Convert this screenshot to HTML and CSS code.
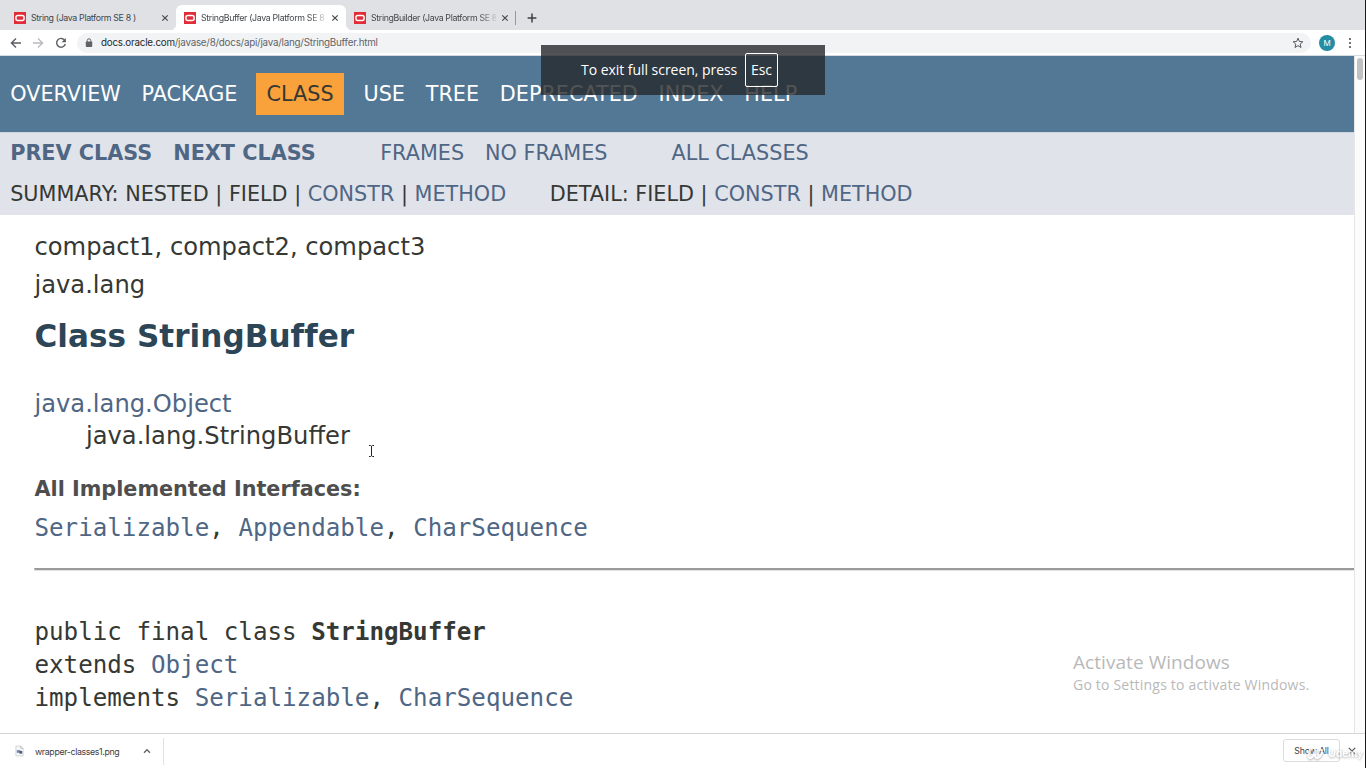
FILE: index.html
```html
<!DOCTYPE html>
<html lang="en">
<head>
<meta charset="utf-8">
<title>StringBuffer (Java Platform SE 8 )</title>
<link rel="stylesheet" href="styles.css">
</head>
<body>
<div class="browser">
  <div class="tabs">
    <div class="tab first">
      <svg class="fav" viewBox="0 0 12 12"><rect width="12" height="12" fill="#e02d38"/><rect x="1.900" y="3.5" width="8.200" height="5" rx="2" fill="none" stroke="#fff" stroke-width="1.5"/></svg>
      <span class="tab-title t1">String (Java Platform SE 8 )</span>
      <svg class="close" viewBox="0 0 8 8"><path d="M1.3 1.3l5.4 5.4M6.7 1.3L1.3 6.7"/></svg>
    </div>
    <div class="tab active">
      <svg class="fav" viewBox="0 0 12 12"><rect width="12" height="12" fill="#e02d38"/><rect x="1.900" y="3.5" width="8.200" height="5" rx="2" fill="none" stroke="#fff" stroke-width="1.5"/></svg>
      <span class="tab-title t2">StringBuffer (Java Platform SE 8</span>
      <svg class="close" viewBox="0 0 8 8"><path d="M1.3 1.3l5.4 5.4M6.7 1.3L1.3 6.7"/></svg>
    </div>
    <div class="tab third">
      <svg class="fav" viewBox="0 0 12 12"><rect width="12" height="12" fill="#e02d38"/><rect x="1.900" y="3.5" width="8.200" height="5" rx="2" fill="none" stroke="#fff" stroke-width="1.5"/></svg>
      <span class="tab-title t3">StringBuilder (Java Platform SE 8</span>
      <svg class="close" viewBox="0 0 8 8"><path d="M1.3 1.3l5.4 5.4M6.7 1.3L1.3 6.7"/></svg>
    </div>
    <span class="tab-sep"></span>
    <svg class="plus" viewBox="0 0 10 10"><path d="M5 .6v8.8M.6 5h8.8"/></svg>
  </div>

  <div class="toolbar">
    <svg class="nav-ic back" viewBox="0 0 12 12"><path d="M11 6H1.5M6 1.4L1.4 6L6 10.6"/></svg>
    <svg class="nav-ic fwd" viewBox="0 0 12 12"><path d="M1 6h9.500M6 1.400L10.600 6L6 10.600"/></svg>
    <svg class="nav-ic reload" viewBox="0 0 12 12"><path d="M9.800 3.500A4.400 4.400 0 1 0 10.300 7"/><path class="solid" d="M10.900 1v4.300H6.600z"/></svg>
    <div class="omnibox">
      <svg class="lock" viewBox="0 0 8 10"><path d="M2.200 4V2.600a1.800 1.800 0 0 1 3.600 0V4" fill="none" stroke="#5f6368" stroke-width="1"/><rect x=".8" y="3.600" width="6.400" height="5.400" rx=".7" fill="#5f6368"/></svg>
      <span class="url"><b>docs.oracle.com</b>/javase/8/docs/api/java/lang/StringBuffer.html</span>
      <svg class="star" viewBox="0 0 12 12"><path d="M6 1.200l1.350 3.250 3.500.3-2.650 2.300.8 3.450L6 8.650 3 10.500l.8-3.450-2.650-2.300 3.500-.3z"/></svg>
    </div>
    <span class="avatar">M</span>
    <svg class="dots" viewBox="0 0 4 12"><circle cx="2" cy="2" r="1.100"/><circle cx="2" cy="6" r="1.100"/><circle cx="2" cy="10" r="1.100"/></svg>
  </div>

  <div class="viewport">
    <div class="page">
      <nav class="topnav">
        <a>OVERVIEW</a><a>PACKAGE</a><a class="current">CLASS</a><a>USE</a><a>TREE</a><a>DEPRECATED</a><a>INDEX</a><a>HELP</a>
      </nav>
      <div class="subnav">
        <div class="subrow links"><b>PREV CLASS</b><b class="next">NEXT CLASS</b><a class="frames">FRAMES</a><a class="noframes">NO FRAMES</a><a class="all">ALL CLASSES</a></div>
        <div class="subrow second"><span>SUMMARY: NESTED | FIELD | <a>CONSTR</a> | <a>METHOD</a></span><span class="detail">DETAIL: FIELD | <a>CONSTR</a> | <a>METHOD</a></span></div>
      </div>
      <main class="content">
        <div class="profile">compact1, compact2, compact3</div>
        <div class="package">java.lang</div>
        <h2>Class StringBuffer</h2>
        <div class="object"><a>java.lang.Object</a></div>
        <div class="self">java.lang.StringBuffer</div>
        <div class="label">All Implemented Interfaces:</div>
        <div class="mono"><a>Serializable</a>, <a>Appendable</a>, <a>CharSequence</a></div>
        <hr>
        <pre class="signature">public final class <b>StringBuffer</b>
extends <a>Object</a>
implements <a>Serializable</a>, <a>CharSequence</a></pre>
      </main>
    </div>
    <div class="scrollbar"><div class="thumb"></div></div>
  </div>

  <div class="downloads">
    <svg class="file" viewBox="0 0 10 12"><path d="M1 .5h5.500L9 3v8.500H1z" fill="#f6f7f9" stroke="#c6c8cc" stroke-width=".8"/><path d="M6.300.5V3H9" fill="none" stroke="#aeb1b5" stroke-width=".8"/><rect x="2" y="5" width="4" height="3" fill="#7a87a6"/><rect x="5" y="6" width="3" height="3" fill="#4a5a85"/></svg>
    <span class="filename">wrapper-classes1.png</span>
    <svg class="chev" viewBox="0 0 8 6"><path d="M1 4.700L4 1.700l3 3"/></svg>
    <span class="dl-sep"></span>
    <span class="showall">Show All</span>
    <svg class="dl-close" viewBox="0 0 8 8"><path d="M.8.8l6.400 6.400M7.200.8L.8 7.200"/></svg>
  </div>
</div>
<div class="screen-edge"></div>

<div class="fullscreen-tip"><span class="tip-text">To exit full screen, press</span><span class="esc">Esc</span></div>
<svg class="ibeam" viewBox="0 0 7 12"><path d="M1 .5h1.500l1 .8 1-.8H6M3.500 1v10M1 11.500h1.500l1-.8 1 .8H6"/></svg>
<div class="activate"><div class="act-title">Activate Windows</div><div class="act-sub">Go to Settings to activate Windows.</div></div>
<div class="watermark"><svg viewBox="0 0 18 16"><path d="M5 3c-3 2-5 9-2 10s5-6 6-8c-2 5-1 8 1 8s5-3 5-6-2-3-3-1"/></svg><span>Udemy</span></div>
</body>
</html>
```
FILE: styles.css
```css
* { box-sizing: border-box; }
body { margin: 0; width: 1366px; height: 768px; overflow: hidden; background: #fff; position: relative; font-family: Inter, Roboto, sans-serif; }
svg { display: block; flex: none; }
.browser { width: 1366px; height: 768px; display: flex; flex-direction: column; }
.tabs { height: 30px; flex: none; background: #e0e1e5; display: flex; align-items: center; padding-top: 5px; }
.tab { height: 25px; display: flex; align-items: center; flex: none; position: relative; }
.first { width: 176px; padding-left: 14px; }
.active { width: 170px; padding-left: 8px; background: #fff; border-radius: 6px 6px 0 0; }
.active::before, .active::after { content: ""; position: absolute; bottom: 0; width: 6px; height: 6px; }
.active::before { left: -6px; background: radial-gradient(circle at 0 0, transparent 6px, #fff 6.5px); }
.active::after { right: -6px; background: radial-gradient(circle at 100% 0, transparent 6px, #fff 6.5px); }
.third { width: 169px; padding-left: 8px; }
.fav { width: 12px; height: 12px; margin-right: 5px; }
.tab-title { width: 125px; font-size: 8.8px; line-height: 14px; color: #44474b; white-space: nowrap; }
.t1 { letter-spacing: -.34px; }
.t2, .t3 { -webkit-mask-image: linear-gradient(90deg, #000 108px, transparent 128px); mask-image: linear-gradient(90deg, #000 108px, transparent 128px); }
.t2 { letter-spacing: -.33px; }
.t3 { letter-spacing: -.36px; }
.close { width: 8px; height: 8px; margin-left: 5px; fill: none; stroke: #46494d; stroke-width: 1.2; }
.tab-sep { width: 1px; height: 14px; background: #95989c; }
.plus { width: 10px; height: 10px; margin-left: 11px; fill: none; stroke: #3c4043; stroke-width: 1.5; }

.toolbar { height: 26px; flex: none; background: #fff; display: flex; align-items: center; border-bottom: 1px solid #d5dbe2; }
.nav-ic { width: 12px; height: 12px; fill: none; stroke: #5a5e63; stroke-width: 1.4; }
.back { margin-left: 10px; }
.fwd { margin-left: 10px; stroke: #b9bbbe; }
.reload { margin-left: 11px; }
.solid { fill: #5a5e63; stroke: none; }
.omnibox { width: 1234px; height: 20px; margin-left: 10px; background: #f1f3f4; border-radius: 10px; display: flex; align-items: center; }
.lock { width: 8px; height: 10px; margin-left: 8px; }
.url { margin-left: 8px; font-size: 9.8px; line-height: 14px; color: #5f6368; white-space: nowrap; letter-spacing: -.22px; }
.url b { font-weight: 400; color: #26282b; }
.star { width: 12px; height: 12px; margin-left: auto; margin-right: 7px; fill: none; stroke: #55595e; stroke-width: 1; }
.avatar { width: 16px; height: 16px; border-radius: 50%; margin-left: 8px; background: #248ca3; color: #fff; font-size: 8px; line-height: 16px; text-align: center; }
.dots { width: 4px; height: 12px; margin-left: 13px; fill: #505357; }

.viewport { flex: 1; display: flex; min-height: 0; }
.page { width: 1354px; font-family: "DejaVu Sans", sans-serif; color: #353833; }
.scrollbar { width: 12px; background: #fcfcfc; border-left: 1px solid #e6e6e6; padding: 2px 0 0 2px; }
.thumb { width: 6px; height: 22px; border-radius: 3px; background: #c1c1c1; }
a { color: #4f6685; }
.topnav { height: 76px; background: #537895; display: flex; align-items: flex-start; padding-top: 17px; font-size: 20.75px; line-height: 42.500px; }
.topnav a { color: #fff; padding: 0 10.5px 0 10.3px; white-space: nowrap; }
.topnav .current { color: #353833; background: #f9a13a; margin: 0 9px 0 8.4px; height: 42px; }
.subnav { height: 83px; background: #e0e3e9; font-size: 20.75px; border-top: 1px solid #ccd5df; }
.subrow { display: flex; height: 41px; line-height: 41px; padding-left: 10.2px; white-space: pre; }
.subrow b { color: #4f6685; }
.next { margin-left: 21px; }
.frames { margin-left: 64.5px; }
.noframes { margin-left: 21px; }
.all { margin-left: 64px; }
.detail { margin-left: 43.5px; }
.content { padding-left: 34.5px; font-size: 24.2px; height: 518px; }
.profile { padding-top: 13px; height: 51px; line-height: 38px; }
.package { height: 38px; line-height: 38px; }
h2 { margin: 0; padding-top: 12px; height: 84px; font-size: 31.05px; line-height: 40px; color: #2c4557; letter-spacing: .05px; font-variant-ligatures: none; }
.object { height: 32px; line-height: 32px; }
.self { height: 47px; line-height: 32px; padding-left: 51.5px; }
.label { height: 43px; line-height: 44px; font-size: 20.75px; font-weight: 700; color: #4e4e4e; }
.mono { height: 58px; line-height: 36px; font-family: "DejaVu Sans Mono", monospace; }
hr { margin: 0 0 0 -.5px; height: 3px; border: 1px solid #e3e3e3; border-top: 2px solid #9a9a9a; border-right: 0; }
.signature { margin: 0; padding-top: 45px; font: 24.2px/33px "DejaVu Sans Mono", monospace; }

.downloads { height: 35px; flex: none; background: #fff; border-top: 1px solid #d4d5d7; display: flex; align-items: center; }
.file { width: 9px; height: 12px; margin-left: 15px; }
.filename { margin-left: 11px; width: 108px; font-size: 8.8px; color: #3c4043; white-space: nowrap; letter-spacing: -.36px; }
.chev { width: 8px; height: 6px; fill: none; stroke: #5f6368; stroke-width: 1.3; }
.dl-sep { width: 1px; height: 27px; margin-left: 12px; background: #e0e1e3; }
.showall { width: 57px; height: 23px; margin: 0 0 2px auto; border: 1px solid #dadce0; border-radius: 3px; font-size: 8.8px; line-height: 21px; text-align: center; letter-spacing: -.2px; color: #3c4043; }
.dl-close { width: 8px; height: 8px; margin: 0 10px 1px 8px; fill: none; stroke: #505357; stroke-width: 1.2; }

.screen-edge { position: absolute; right: 0; top: 0; width: 1px; height: 768px; background: #1b1b1b; }
.fullscreen-tip { position: absolute; left: 541px; top: 45px; width: 284px; height: 50px; background: rgba(38, 40, 42, .8); color: #fff; display: flex; align-items: center; padding-left: 40px; font-family: "Open Sans", sans-serif; font-size: 14px; }
.tip-text { width: 164px; white-space: nowrap; letter-spacing: -.04px; padding-bottom: 2px; }
.esc { width: 33px; height: 34px; border: 1px solid #fff; border-radius: 2px; line-height: 32px; text-align: center; }
.ibeam { position: absolute; left: 368px; top: 445px; width: 7px; height: 12px; fill: none; stroke: #222; stroke-width: 1; }
.activate { position: absolute; left: 1073px; top: 650px; color: #b9b9b9; font-family: "Open Sans", sans-serif; white-space: nowrap; }
.act-title { font-size: 19px; line-height: 25px; letter-spacing: .06px; }
.act-sub { font-size: 14px; line-height: 20px; letter-spacing: .2px; }
.watermark { position: absolute; left: 1307px; top: 745px; display: flex; align-items: center; color: #fff; font: 700 11px/16px Lato, sans-serif; filter: drop-shadow(0 1px 1px #999); opacity: .8; }
.watermark svg { width: 18px; height: 16px; fill: none; stroke: #fff; stroke-width: 2; margin-right: 3px; }
```
